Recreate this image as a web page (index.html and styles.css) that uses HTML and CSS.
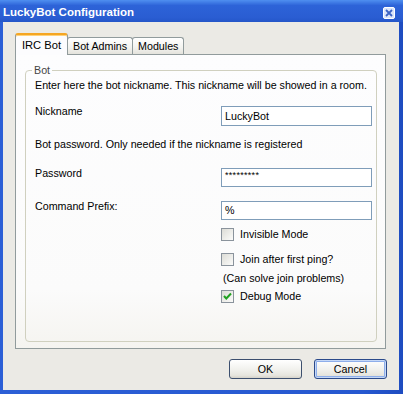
FILE: index.html
```html
<!DOCTYPE html>
<html lang="en">
<head>
  <meta charset="UTF-8" />
  <title>LuckyBot Configuration</title>
  <link rel="stylesheet" href="styles.css">
</head>
<body>
  <div class="window">
    <div class="titlebar">
      <span class="title">LuckyBot Configuration</span>
      <span class="close">
        <svg width="12" height="12" viewBox="0 0 12 12">
          <rect x="0.5" y="0.5" width="11" height="11" rx="1.5" fill="#dbe5fa" stroke="#ffffff" />
          <path d="M3 3 L9 9 M9 3 L3 9" stroke="#3d64c4" stroke-width="1.8" />
        </svg>
      </span>
    </div>
    <div class="client">
      <div class="tabs">
        <div class="tab active">IRC Bot</div>
        <div class="tab">Bot Admins</div>
        <div class="tab">Modules</div>
      </div>
      <div class="panel">
        <div class="group">
          <span class="legend">Bot</span>
          <p class="note">Enter here the bot nickname. This nickname will be showed in a room.</p>
          <div class="row">
            <label>Nickname</label>
            <div class="field">LuckyBot</div>
          </div>
          <p class="note gap-pass">Bot password. Only needed if the nickname is registered</p>
          <div class="row gap-row">
            <label>Password</label>
            <div class="field short pass">*********</div>
          </div>
          <div class="row gap-cmd">
            <label>Command Prefix:</label>
            <div class="field short">%</div>
          </div>
          <div class="check gap-c1"><span class="box"></span>Invisible Mode</div>
          <div class="check gap-c2"><span class="box"></span>Join after first ping?</div>
          <p class="hint">(Can solve join problems)</p>
          <div class="check gap-c3">
            <span class="box">
              <svg width="11" height="11" viewBox="0 0 11 11">
                <path d="M2 5 L4.3 7.5 L9 2.5" fill="none" stroke="#21a121" stroke-width="2" />
              </svg>
            </span>Debug Mode
          </div>
        </div>
      </div>
      <div class="buttons">
        <button>OK</button>
        <button class="default">Cancel</button>
      </div>
    </div>
  </div>
</body>
</html>
```

FILE: styles.css
```css
body {
  margin: 0;
  font-family: 'Liberation Sans', Arial, sans-serif;
  font-size: 10.7px;
  color: #000;
}
.window {
  width: 403px;
  height: 394px;
  background: linear-gradient(to right, #2c5fd6, #2658d0 90%, #1e4cc0);
  display: flex;
  flex-direction: column;
}
.titlebar {
  height: 22px;
  box-sizing: border-box;
  padding: 3px 8px 0 3px;
  line-height: 19px;
  display: flex;
  justify-content: space-between;
  align-items: center;
  background: linear-gradient(#4f8ff0, #2d63d8 25%, #2a5dd2 80%, #2456c8);
}
.title {
  color: #fff;
  font-weight: bold;
  font-size: 11.5px;
}
.close {
  display: flex;
}
.client {
  flex: 1;
  margin: 0 4px 4px 3px;
  background: #ebeae5;
  padding: 11px 13px 0 12px;
}
.tabs {
  display: flex;
  align-items: flex-end;
  height: 21px;
}
.tab {
  height: 17px;
  box-sizing: border-box;
  line-height: 16px;
  padding: 0 5px;
  white-space: nowrap;
  border: 1px solid #919b9c;
  border-bottom: none;
  border-radius: 3px 3px 0 0;
  background: linear-gradient(#ffffff, #f3f3ef 60%, #e4e3dc);
  margin-left: -1px;
}
.tab.active {
  height: 22px;
  margin-bottom: -1px;
  margin-left: 0;
  width: 53px;
  padding: 0;
  text-align: center;
  line-height: 20px;
  font-size: 11.2px;
  background: #fcfcfe;
  border-top: 2px solid #f5a623;
  box-shadow: inset 0 1px 0 #ffd27a;
  position: relative;
  z-index: 1;
}
.panel {
  height: 295px;
  box-sizing: border-box;
  border: 1px solid #919b9c;
  background: linear-gradient(#fdfdfe, #fbfbfb 80%, #f5f4f0);
  padding: 15px 8px 0 9px;
}
.group {
  position: relative;
  height: 272px;
  box-sizing: border-box;
  border: 1px solid #d0d0bf;
  border-radius: 4px;
  padding: 7px 0 0 9px;
}
.legend {
  position: absolute;
  top: -8px;
  left: 6px;
  padding: 0 2px;
  line-height: 14px;
  background: #fdfdfe;
  color: #444;
}
.note {
  margin: 0;
  line-height: 14px;
}
.row {
  display: flex;
  align-items: flex-start;
  margin-top: 12px;
}
.row label {
  width: 186px;
  line-height: 14px;
}
.field {
  width: 151px;
  height: 20px;
  box-sizing: border-box;
  margin-top: 2px;
  border: 1px solid #7f9db9;
  background: #fff;
  padding: 0 3px;
  line-height: 18px;
}
.field.short {
  height: 19px;
  line-height: 17px;
}
.field.pass {
  font-size: 9px;
  line-height: 13px;
  letter-spacing: 0.3px;
}
.gap-pass {
  margin-top: 11px;
}
.gap-row {
  margin-top: 15px;
}
.gap-cmd {
  margin-top: 12px;
}
.check {
  display: flex;
  align-items: center;
  height: 13px;
  margin-left: 186px;
  line-height: 13px;
}
.box {
  width: 13px;
  height: 13px;
  box-sizing: border-box;
  border: 1px solid #8a939c;
  background: linear-gradient(135deg, #dcdcd6, #f2f2ef 70%, #fbfbfa);
  margin-right: 6px;
  display: flex;
  align-items: center;
  justify-content: center;
}
.gap-c1 {
  margin-top: 8px;
}
.gap-c2 {
  margin-top: 12px;
}
.hint {
  margin: 5px 0 0 188px;
  line-height: 14px;
}
.gap-c3 {
  margin-top: 5px;
}
.buttons {
  display: flex;
  justify-content: flex-end;
  gap: 12px;
  margin: 10px -1px 0 0;
}
button {
  width: 73px;
  height: 20px;
  font-family: 'Liberation Sans', Arial, sans-serif;
  font-size: 10.7px;
  color: #000;
  border: 1px solid #3c4f6e;
  border-radius: 3px;
  background: linear-gradient(#ffffff, #f2f2ee 50%, #e6e5de 85%, #d5d2c9);
  padding: 0;
}
button.default {
  border-color: #2b4a8a;
  box-shadow: inset 0 0 0 1px #c5d8f7, inset 0 0 0 2px #8eaeea;
}
```
